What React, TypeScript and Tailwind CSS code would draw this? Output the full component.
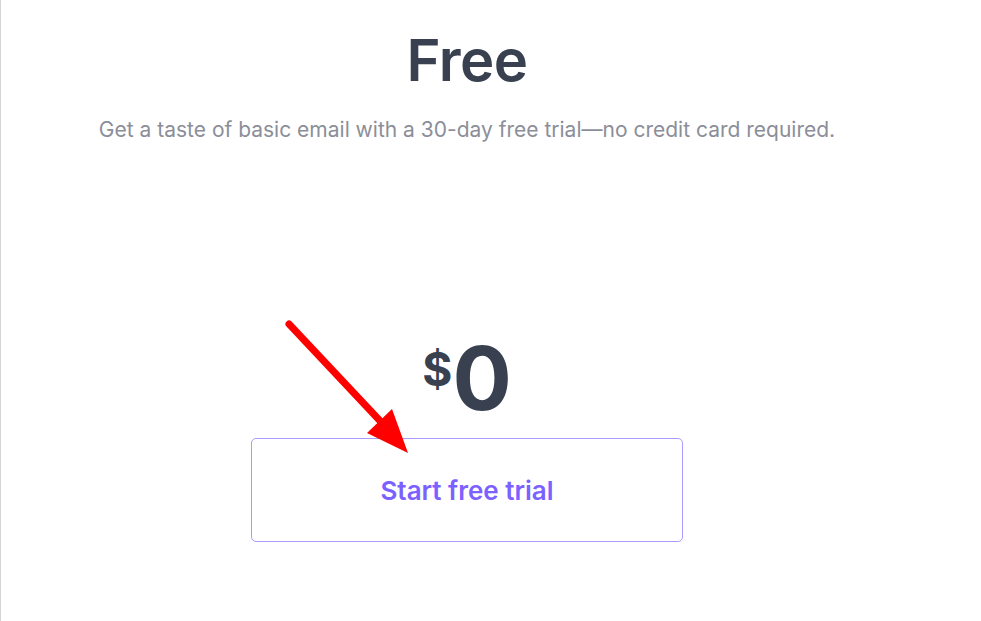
const PricingCard = () => {
  return (
    <div className="flex w-[932px] flex-col items-center pt-[31px]">
      <h1 className="text-[58px] leading-none font-semibold tracking-[-0.5px] text-[#394150]">
        Free
      </h1>
      <p className="mt-[27px] text-[21px] leading-[28px] text-[#8b8e99]">
        Get a taste of basic email with a 30-day free trial—no credit card required.
      </p>

      <div className="mt-[190px] flex items-start text-[#394150]">
        <span className="mt-[12px] text-[46px] leading-none font-bold">$</span>
        <span className="text-[88px] leading-none font-bold">0</span>
      </div>

      <button className="mt-[16px] flex h-[104px] w-[432px] items-center justify-center rounded-[5px] border border-[#a99bff] bg-white text-[26px] font-semibold text-[#7b61ff]">
        Start free trial
      </button>
    </div>
  );
};

const RedArrow = () => (
  <svg
    className="pointer-events-none absolute left-0 top-0"
    width="981"
    height="621"
    viewBox="0 0 981 621"
  >
    <line
      x1="288"
      y1="324"
      x2="382"
      y2="424"
      stroke="#ff0000"
      strokeWidth="7"
      strokeLinecap="round"
    />
    <polygon points="407,453 366,433 391,409" fill="#ff0000" />
  </svg>
);

export default function App() {
  return (
    <div
      className="relative h-[621px] w-full overflow-hidden border-l border-[#d4d4d4] bg-white"
      style={{ fontFamily: "Inter, 'Noto Sans', sans-serif" }}
    >
      <PricingCard />
      <RedArrow />
    </div>
  );
}
